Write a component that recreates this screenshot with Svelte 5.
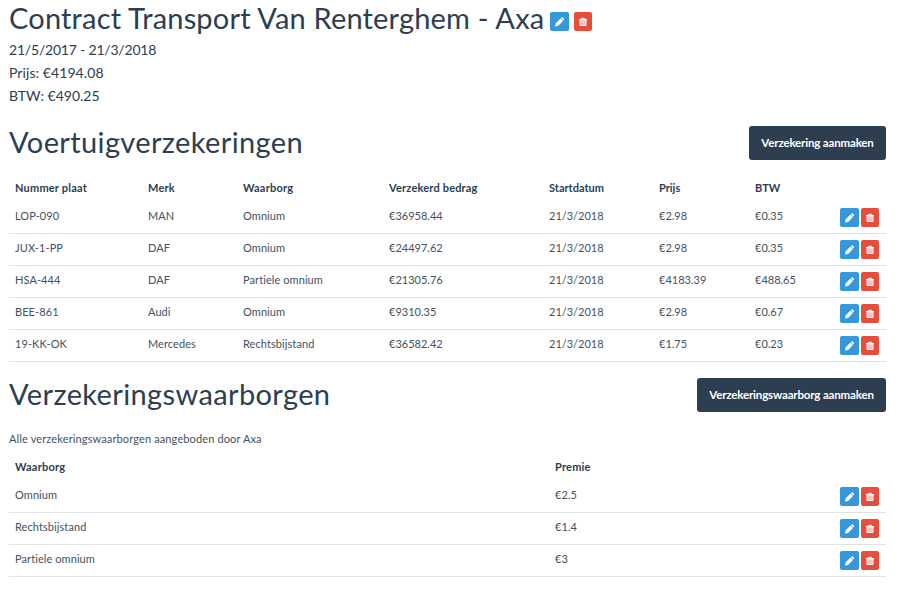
<script>
  const vehicles = [
    ['LOP-090', 'MAN', 'Omnium', '€36958.44', '21/3/2018', '€2.98', '€0.35'],
    ['JUX-1-PP', 'DAF', 'Omnium', '€24497.62', '21/3/2018', '€2.98', '€0.35'],
    ['HSA-444', 'DAF', 'Partiele omnium', '€21305.76', '21/3/2018', '€4183.39', '€488.65'],
    ['BEE-861', 'Audi', 'Omnium', '€9310.35', '21/3/2018', '€2.98', '€0.67'],
    ['19-KK-OK', 'Mercedes', 'Rechtsbijstand', '€36582.42', '21/3/2018', '€1.75', '€0.23'],
  ];
  const vehicleHeads = ['Nummer plaat', 'Merk', 'Waarborg', 'Verzekerd bedrag', 'Startdatum', 'Prijs', 'BTW'];
  const coverages = [['Omnium', '€2.5'], ['Rechtsbijstand', '€1.4'], ['Partiele omnium', '€3']];
</script>

{#snippet actions()}
  <span class="actions">
    <button class="icon edit" aria-label="Bewerken">
      <svg width="19" height="19" viewBox="0 0 19 19" fill="#fff"><path d="M5 14.4l.5-2.9 5-5 2.5 2.5-5 5zM10.9 6.1l.6-.6q.6-.5 1.2 0l1.1 1.1q.6.6 0 1.2l-.5.7z"/></svg>
    </button>
    <button class="icon remove" aria-label="Verwijderen">
      <svg width="18" height="19" viewBox="0 0 18 19" fill="none" stroke="#fff"><path d="M5 7.5h8M7.5 7V6.3h3V7" /><path d="M6 8h6v5.5H6z" fill="#fff" fill-opacity=".55"/><path d="M8 8.5v5M10 8.5v5" stroke-width=".7" opacity=".7"/></svg>
    </button>
  </span>
{/snippet}

<main>
  <header>
    <h1>Contract Transport Van Renterghem - Axa</h1>
    {@render actions()}
  </header>
  <div class="meta">
    <p>21/5/2017 - 21/3/2018</p>
    <p>Prijs: €4194.08</p>
    <p>BTW: €490.25</p>
  </div>

  <section class="vehicles">
    <div class="heading">
      <h2>Voertuigverzekeringen</h2>
      <button class="primary">Verzekering aanmaken</button>
    </div>
    <div class="table">
      <div class="row head">
        {#each vehicleHeads as h}<span>{h}</span>{/each}
      </div>
      {#each vehicles as v}
        <div class="row">
          {#each v as cell}<span>{cell}</span>{/each}
          {@render actions()}
        </div>
      {/each}
    </div>
  </section>

  <section class="coverages">
    <div class="heading">
      <h2>Verzekeringswaarborgen</h2>
      <button class="primary">Verzekeringswaarborg aanmaken</button>
    </div>
    <p class="note">Alle verzekeringswaarborgen aangeboden door Axa</p>
    <div class="table">
      <div class="row head"><span>Waarborg</span><span>Premie</span></div>
      {#each coverages as c}
        <div class="row">
          {#each c as cell}<span>{cell}</span>{/each}
          {@render actions()}
        </div>
      {/each}
    </div>
  </section>
</main>

<style>
  :global(body) { background: #fff; }
  main {
    box-sizing: border-box;
    width: 900px;
    height: 596px;
    padding: 0 14px 0 9px;
    overflow: hidden;
    font-family: Lato, sans-serif;
    font-size: 11px;
    font-variant-ligatures: none;
    color: #2c3e50;
  }
  h1, h2, p { margin: 0; font-weight: 400; white-space: nowrap; }
  h1 { font-size: 29px; line-height: 36px; letter-spacing: .18px; }
  h2 { font-size: 29px; line-height: 32px; letter-spacing: .37px; }
  header { display: flex; align-items: flex-start; gap: 6px; height: 38px; }
  header .actions { padding-top: 12px; gap: 5px; }
  .meta { height: 88px; }
  .meta p { font-size: 14px; line-height: 23px; }
  .meta p:first-child { letter-spacing: -.2px; }
  .meta p:nth-child(2) { letter-spacing: .08px; }
  .heading { display: flex; justify-content: space-between; height: 34px; }
  button { border: 0; margin: 0; color: #fff; font-family: inherit; }
  .primary {
    height: 34px;
    padding: 0 12px 1px;
    border-radius: 3px;
    background: #2c3e50;
    font-size: 11.5px;
    font-weight: 700;
    letter-spacing: -.16px;
    white-space: nowrap;
  }
  .vehicles .primary { width: 137px; }
  .coverages .primary { width: 189px; }
  .vehicles .table { padding-top: 14px; }
  .coverages { padding-top: 16px; }
  .note { padding-top: 19px; line-height: 16px; letter-spacing: .13px; color: #43525f; }
  .coverages .table { padding-top: 6px; }
  .row {
    box-sizing: border-box;
    display: grid;
    height: 32px;
    padding: 6px 6px 0;
    border-bottom: 1px solid #e1e4e5;
    line-height: 16px;
    color: #43525f;
    letter-spacing: .08px;
    white-space: nowrap;
  }
  .row span:nth-child(4), .row span:nth-child(5), .row span:nth-child(6), .row span:nth-child(7) { letter-spacing: 0; }
  .vehicles .row { grid-template-columns: 133px 95px 146px 160px 110px 96px 85px 40px; }
  .coverages .row { grid-template-columns: 540px 285px 40px; }
  .row.head { height: 28px; border: 0; font-weight: 700; letter-spacing: .2px; color: #2c3e50; }
  .actions { display: flex; gap: 2px; }
  .icon {
    display: flex;
    align-items: center;
    justify-content: center;
    width: 19px;
    height: 19px;
    padding: 0;
    border-radius: 2px;
  }
  .edit { background: #3498db; }
  .remove { width: 18px; background: #e74c3c; }
  .head span:nth-child(4) { letter-spacing: .18px; }
</style>
